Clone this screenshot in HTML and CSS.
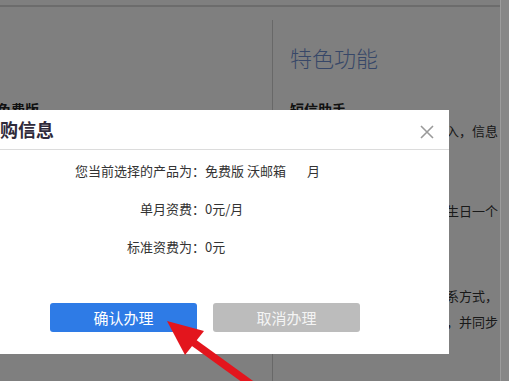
FILE: index.html
```html
<!DOCTYPE html>
<html lang="zh-CN">

<head>
    <meta charset="UTF-8">
    <meta name="viewport" content="width=device-width, initial-scale=1.0">
    <title>订购信息</title>

    <link rel="stylesheet" href="styles.css">
</head>

<body>
    <div class="page">
        <div class="content">
            <div class="topbar"></div>

            <div class="main">
                <!-- Product column -->
                <div class="left-col">
                    <div class="plan-name">免费版</div>
                </div>

                <!-- Features column -->
                <div class="right-col">
                    <h2 class="feature-title">特色功能</h2>
                    <h3 class="feature-name">短信助手</h3>
                    <p class="feature-text line-a">来信短信提醒，邮件实时转入，信息</p>
                    <p class="feature-text line-b">好友过生日时提醒您，送上生日一个</p>
                    <p class="feature-text line-c">通讯录可保存好友的各种联系方式，支持手机端随时查看与编辑，并同步</p>
                </div>
            </div>
        </div>
        <div class="scrollbar"></div>
    </div>

    <!-- Dim layer behind the dialog -->
    <div class="mask"></div>

    <!-- Order dialog -->
    <div class="dialog">
        <div class="dialog-header">
            <span class="dialog-title">订购信息</span>
            <svg class="dialog-close" width="14" height="14" viewBox="0 0 14 14">
                <path d="M1 1 L13 13 M13 1 L1 13" stroke="#9a9a9a" stroke-width="1.6" fill="none" />
            </svg>
        </div>

        <div class="dialog-body">
            <span class="info-label">您当前选择的产品为：</span>
            <span class="info-value">免费版 沃邮箱<span class="month-gap"></span>月</span>

            <span class="info-label">单月资费：</span>
            <span class="info-value">0元/月</span>

            <span class="info-label">标准资费为：</span>
            <span class="info-value">0元</span>
        </div>

        <div class="dialog-actions">
            <button class="btn btn-confirm">确认办理</button>
            <button class="btn btn-cancel">取消办理</button>
        </div>
    </div>

    <!-- Annotation arrow -->
    <svg class="arrow" width="509" height="381" viewBox="0 0 509 381">
        <line x1="190" y1="340" x2="262" y2="392" stroke="#e3151d" stroke-width="7.5" />
        <polygon points="167,321 204,331 185,355" fill="#e3151d" />
    </svg>
</body>

</html>
```

FILE: styles.css
```css
body {
    margin: 0;
    width: 509px;
    height: 381px;
    overflow: hidden;
    font-family: "Noto Sans CJK SC", "Liberation Sans", sans-serif;
    background: #fff;
}

.page {
    display: flex;
    height: 381px;
}

.content {
    width: 500px;
    background: #fff;
}

.topbar {
    height: 5px;
    border-bottom: 2px solid #d8d8d8;
}

.main {
    display: flex;
    margin-top: 13px;
    height: 361px;
}

.left-col {
    width: 272px;
    border-right: 1px solid #d0d0d0;
}

.plan-name {
    margin: 79px 0 0 -3px;
    font-size: 14px;
    font-weight: bold;
    line-height: 20px;
    color: #222;
}

.right-col {
    width: 210px;
    padding-left: 17px;
    overflow: hidden;
}

.feature-title {
    margin: 22px 0 0;
    font-size: 22px;
    line-height: 30px;
    font-weight: 300;
    color: #6f8fd0;
}

.feature-name {
    margin: 27px 0 0;
    font-size: 14px;
    line-height: 20px;
    font-weight: bold;
    color: #222;
}

.feature-text {
    margin: 0;
    font-size: 13px;
    line-height: 20px;
    color: #333;
}

.line-a {
    margin-top: 2px;
}

.line-b {
    margin-top: 60px;
}

.line-c {
    margin-top: 62px;
    line-height: 26px;
}

.scrollbar {
    position: relative;
    z-index: 2;
    width: 8px;
    background: #878787;
    border-left: 1px solid #9c9c9c;
}

.mask {
    position: fixed;
    inset: 0;
    background: rgba(0, 0, 0, 0.5);
}

.dialog {
    position: absolute;
    top: 110px;
    left: -40px;
    width: 489px;
    height: 244px;
    background: #fff;
}

.dialog-header {
    display: flex;
    align-items: center;
    justify-content: space-between;
    height: 39px;
    padding: 0 15px 0 22px;
    border-bottom: 1px solid #dcdcdc;
}

.dialog-title {
    font-size: 18px;
    font-weight: bold;
    color: #2f2a3a;
    margin-top: -2px;
}

.dialog-close {
    margin-top: 4px;
}

.dialog-body {
    display: grid;
    grid-template-columns: 245px auto;
    row-gap: 18px;
    padding-top: 11px;
    font-size: 13px;
    line-height: 20px;
    color: #333;
}

.info-label {
    text-align: right;
}

.month-gap {
    display: inline-block;
    width: 21px;
}

.dialog-actions {
    display: flex;
    gap: 16px;
    margin-top: 46px;
    padding-left: 90px;
}

.btn {
    width: 147px;
    height: 29px;
    padding: 0;
    border: none;
    border-radius: 3px;
    font-family: "Noto Sans CJK SC", sans-serif;
    font-size: 15px;
    color: #fff;
    cursor: pointer;
}

.btn-confirm {
    background-color: #2e7be6;
}

.btn-cancel {
    background-color: #bcbcbc;
    color: #f4f4f4;
}

.arrow {
    position: absolute;
    top: 0;
    left: 0;
    pointer-events: none;
}
```
